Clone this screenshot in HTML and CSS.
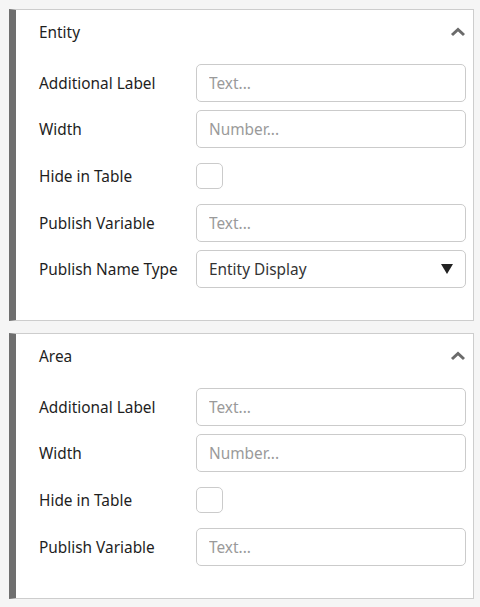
FILE: index.html
```html
<!DOCTYPE html>
<html lang="en">
<head>
  <meta charset="UTF-8" />
  <title>Columns</title>
  <link rel="stylesheet" href="styles.css">
</head>
<body>
  <div class="panel">
    <div class="panel-header">
      <span>Entity</span>
      <svg class="caret" width="16" height="10" viewBox="0 0 16 10"><path d="M2 8 L8 2.5 L14 8" fill="none" stroke="#6b6b6b" stroke-width="3"/></svg>
    </div>
    <div class="panel-body">
      <div class="row">
        <label>Additional Label</label>
        <input type="text" placeholder="Text..." />
      </div>
      <div class="row">
        <label>Width</label>
        <input type="text" placeholder="Number..." />
      </div>
      <div class="row check-row">
        <label>Hide in Table</label>
        <span class="checkbox"></span>
      </div>
      <div class="row">
        <label>Publish Variable</label>
        <input type="text" placeholder="Text..." />
      </div>
      <div class="row">
        <label>Publish Name Type</label>
        <div class="select-box">
          <span>Entity Display</span>
          <svg width="12" height="10" viewBox="0 0 12 10"><path d="M0 0 L12 0 L6 10 Z" fill="#222"/></svg>
        </div>
      </div>
    </div>
  </div>

  <div class="panel">
    <div class="panel-header">
      <span>Area</span>
      <svg class="caret" width="16" height="10" viewBox="0 0 16 10"><path d="M2 8 L8 2.5 L14 8" fill="none" stroke="#6b6b6b" stroke-width="3"/></svg>
    </div>
    <div class="panel-body">
      <div class="row">
        <label>Additional Label</label>
        <input type="text" placeholder="Text..." />
      </div>
      <div class="row">
        <label>Width</label>
        <input type="text" placeholder="Number..." />
      </div>
      <div class="row check-row">
        <label>Hide in Table</label>
        <span class="checkbox"></span>
      </div>
      <div class="row">
        <label>Publish Variable</label>
        <input type="text" placeholder="Text..." />
      </div>
    </div>
  </div>
</body>
</html>
```

FILE: styles.css
```css
* {
  box-sizing: border-box;
  font-family: "Noto Sans", "Open Sans", sans-serif;
}

body {
  margin: 0;
  padding: 9px 6px 0 9px;
  background: #f5f5f5;
  color: #1e1e1e;
  font-size: 15.4px;
}

.panel {
  background: #fff;
  border: 1px solid #cdcdcd;
  border-left: 7px solid #6f6f6f;
  margin-bottom: 12px;
}

.panel-header {
  height: 44px;
  padding: 0 7px 0 23px;
  display: flex;
  align-items: center;
  justify-content: space-between;
}

.panel-body {
  padding: 10px 7px 32px 23px;
  display: flex;
  flex-direction: column;
  gap: 8px;
}

.row {
  display: flex;
  align-items: center;
  height: 38px;
}

.check-row {
  height: 40px;
}

.row label {
  width: 157px;
  flex-shrink: 0;
}

.row input {
  flex: 1;
  height: 38px;
  border: 1px solid #cbcbcb;
  border-radius: 5px;
  padding: 0 12px;
  font-size: 15.4px;
  color: #222;
}

.row input::placeholder {
  color: #9a9a9a;
}

.checkbox {
  width: 27px;
  height: 26px;
  border: 1px solid #cbcbcb;
  border-radius: 5px;
}

.select-box {
  flex: 1;
  height: 38px;
  border: 1px solid #cbcbcb;
  border-radius: 5px;
  padding: 0 12px;
  display: flex;
  align-items: center;
  justify-content: space-between;
  color: #333;
}
```
